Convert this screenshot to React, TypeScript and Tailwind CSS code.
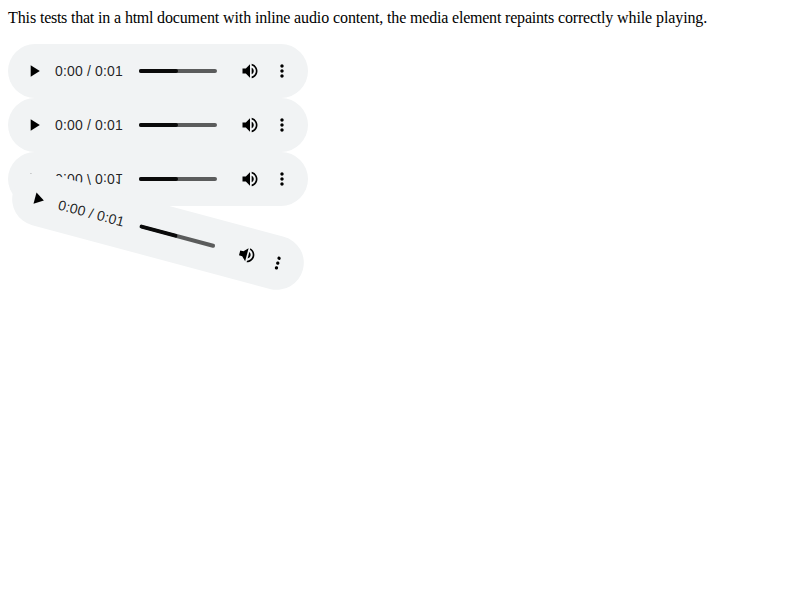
import { Fragment } from "react";

const SENTENCE =
  "This tests that in a html document with inline audio content, the media element repaints correctly while playing.";

// Difference between each 16px serif glyph's whole-pixel advance and its natural one.
const ADVANCE_DELTA: Record<string, number> = {
  T: 0.227,
  i: -0.445,
  t: -0.445,
  l: -0.445,
  m: -0.445,
  s: -0.227,
  e: -0.102,
  a: -0.102,
  c: -0.102,
  r: -0.328,
  w: 0.445,
};

function wordSpacing(word: string) {
  const total = [...word].reduce((sum, ch) => sum + (ADVANCE_DELTA[ch] ?? 0), 0);
  return total / word.length;
}

function PlayIcon() {
  return (
    <svg viewBox="0 0 24 24" className="block h-5 w-5 shrink-0">
      <path d="M8 5v14l11-7z" />
    </svg>
  );
}

function VolumeIcon() {
  return (
    <svg viewBox="0 0 24 24" className="block h-5 w-5 shrink-0">
      <path d="M3 9v6h4l5 5V4L7 9H3zm13.5 3c0-1.77-1.02-3.29-2.5-4.03v8.05c1.48-.73 2.5-2.25 2.5-4.02zM14 3.23v2.06c2.89.86 5 3.54 5 6.71s-2.11 5.85-5 6.71v2.06c4.01-.91 7-4.49 7-8.77s-2.99-7.86-7-8.77z" />
    </svg>
  );
}

function MoreIcon() {
  return (
    <svg viewBox="0 0 24 24" className="block h-5 w-5 shrink-0">
      <path d="M12 8c1.1 0 2-.9 2-2s-.9-2-2-2-2 .9-2 2 .9 2 2 2zm0 2c-1.1 0-2 .9-2 2s.9 2 2 2 2-.9 2-2-.9-2-2-2zm0 6c-1.1 0-2 .9-2 2s.9 2 2 2 2-.9 2-2-.9-2-2-2z" />
    </svg>
  );
}

function AudioPlayer({ className = "" }: { className?: string }) {
  return (
    <div
      className={`flex h-[54px] w-[300px] items-center rounded-full bg-[#f1f3f4] px-4 text-black ${className}`}
    >
      <PlayIcon />
      <span className="ml-[11px] w-[84px] shrink-0 whitespace-pre font-['Liberation_Sans',Arial,sans-serif] text-[14px] leading-[20px] tracking-[0.17px] text-black/87">
        0:00 / 0:01
      </span>
      <div className="h-1 w-[78px] shrink-0 overflow-hidden rounded-full bg-[#5b5c5c]">
        <div className="h-full w-1/2 rounded-r-[2px] bg-[#0a0a0a]" />
      </div>
      <div className="ml-auto flex gap-3">
        <VolumeIcon />
        <MoreIcon />
      </div>
    </div>
  );
}

export default function App() {
  return (
    <div className="min-h-screen bg-white px-2 pt-2">
      <p className="whitespace-nowrap font-['Liberation_Serif','Times_New_Roman',serif] text-[16px] leading-5 text-black">
        {SENTENCE.split(" ").map((word, i) => (
          <Fragment key={i}>
            {i > 0 && " "}
            <span style={{ letterSpacing: `${wordSpacing(word)}px` }}>{word}</span>
          </Fragment>
        ))}
      </p>
      <div className="flex flex-col pt-4">
        <AudioPlayer />
        <AudioPlayer />
        <AudioPlayer className="-scale-y-100" />
        <AudioPlayer className="-mt-0.5 rotate-15" />
      </div>
    </div>
  );
}
